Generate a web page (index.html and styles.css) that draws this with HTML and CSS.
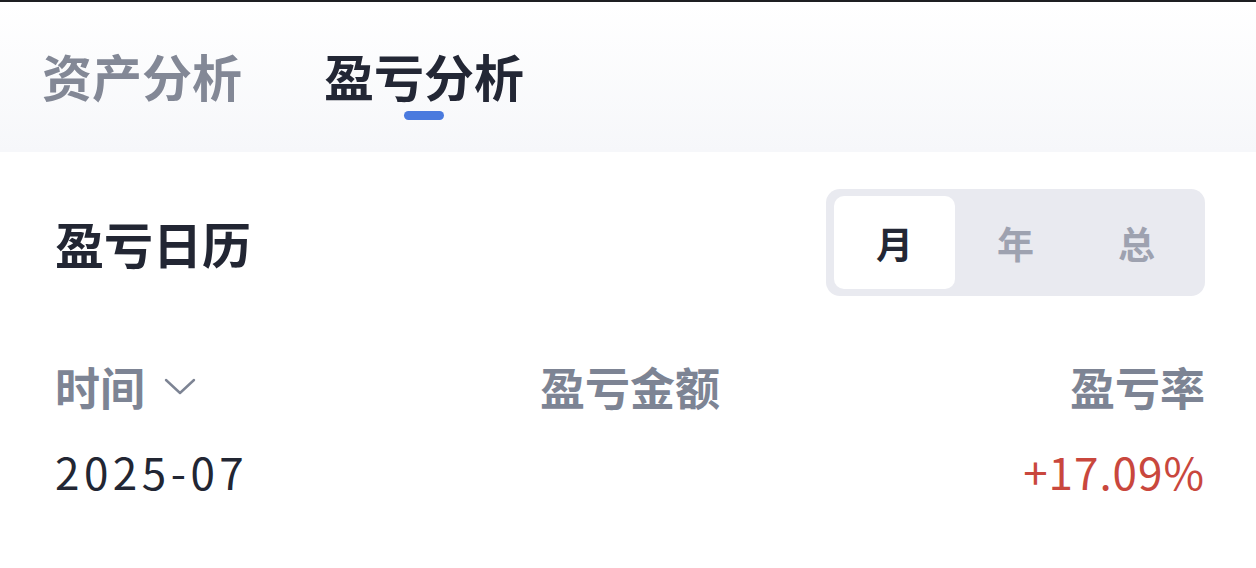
FILE: index.html
```html
<!DOCTYPE html>
<html lang="zh">

<head>
  <meta charset="UTF-8" />
  <meta name="viewport" content="width=device-width, initial-scale=1.0" />
  <title>盈亏分析</title>
  <link rel="stylesheet" href="styles.css">
</head>

<body>
  <div class="tabs">
    <div class="tab">资产分析</div>
    <div class="tab active">盈亏分析</div>
  </div>

  <div class="panel">
    <div class="panel-head">
      <h2>盈亏日历</h2>
      <div class="seg">
        <button class="seg-btn on">月</button>
        <button class="seg-btn">年</button>
        <button class="seg-btn">总</button>
      </div>
    </div>

    <div class="table-head">
      <div class="col col-left">时间
        <svg class="chev" width="34" height="20" viewBox="0 0 34 20">
          <path d="M3 4 L17 17 L31 4" fill="none" stroke="#7d8494" stroke-width="2.4" stroke-linecap="round" stroke-linejoin="round" />
        </svg>
      </div>
      <div class="col col-mid">盈亏金额</div>
      <div class="col col-right">盈亏率</div>
    </div>

    <div class="table-row">
      <div class="col col-left date">2025-07</div>
      <div class="col col-mid"></div>
      <div class="col col-right up">+17.09%</div>
    </div>
  </div>
</body>

</html>
```

FILE: styles.css
```css
body {
  margin: 0;
  font-family: "Noto Sans CJK SC", "Noto Sans", sans-serif;
  background: #fff;
  color: #222633;
  border-top: 2px solid #1e1f22;
}

.tabs {
  display: flex;
  gap: 82px;
  height: 150px;
  padding: 0 42px;
  box-sizing: border-box;
  background: linear-gradient(#ffffff, #f6f7fa);
}

.tab {
  position: relative;
  font-size: 50px;
  font-weight: 700;
  line-height: 1;
  padding-top: 48px;
  color: #838896;
}

.tab.active {
  color: #232735;
}

.tab.active::after {
  content: "";
  position: absolute;
  left: 50%;
  top: 109px;
  width: 40px;
  height: 9px;
  margin-left: -20px;
  border-radius: 5px;
  background: #4a7ade;
}

.panel {
  padding: 37px 51px 0 55px;
}

.panel-head {
  display: flex;
  justify-content: space-between;
  align-items: center;
}

.panel-head h2 {
  margin: 0;
  font-size: 49px;
  font-weight: 700;
  color: #222633;
}

.seg {
  display: flex;
  padding: 7px 8px;
  background: #e9eaf0;
  border-radius: 14px;
}

.seg-btn {
  width: 121px;
  height: 93px;
  border: 0;
  border-radius: 10px;
  background: transparent;
  font-family: inherit;
  font-size: 37px;
  font-weight: 700;
  color: #9ea2b0;
}

.seg-btn.on {
  background: #fff;
  color: #232735;
}

.table-head,
.table-row {
  display: flex;
  align-items: center;
}

.table-head {
  margin-top: 62px;
  font-size: 45px;
  font-weight: 700;
  color: #7d8494;
  height: 56px;
}

.table-row {
  margin-top: 29px;
  height: 56px;
  font-size: 44px;
  letter-spacing: 1px;
}

.col {
  flex: 1;
  display: flex;
  align-items: center;
}

.col-mid {
  justify-content: center;
}

.col-right {
  justify-content: flex-end;
}

.date {
  letter-spacing: 4.5px;
}

.chev {
  margin-left: 18px;
}

.up {
  color: #c9473d;
}
```
